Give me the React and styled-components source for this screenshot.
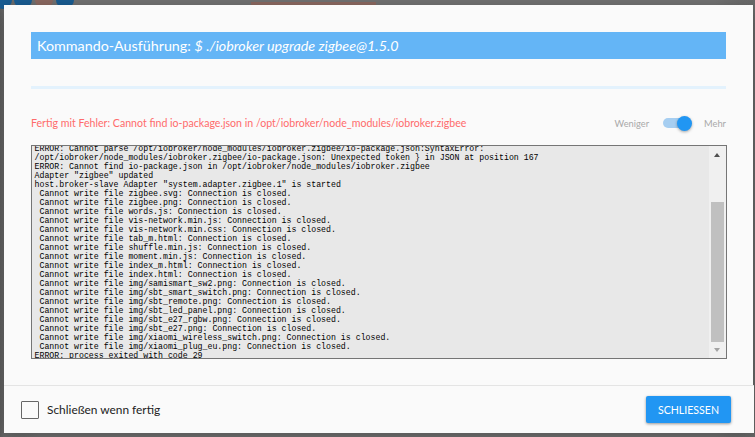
import React from "react";
import styled, { createGlobalStyle } from "styled-components";

const Global = createGlobalStyle`
  html, body { margin: 0; padding: 0; width: 755px; height: 437px; overflow: hidden; background: #6e6e6e; }
  #root { width: 755px; height: 437px; }
  * { box-sizing: border-box; }
`;

const Backdrop = styled.div`
  position: relative;
  width: 755px;
  height: 437px;
  background: linear-gradient(90deg, #5f5f5f 0, #6a6a6a 4px, #757575 40px, #757575 715px, #6a6a6a 755px);
  overflow: hidden;
  padding: 5px 2px 4px 4px;
`;
const BgCircle = styled.span`
  position: absolute;
  top: -9px;
  left: ${p => p.$x}px;
  width: 18px;
  height: 18px;
  border-radius: 50%;
  background: ${p => p.$c};
`;
const BgBar = styled.span`
  position: absolute;
  top: 2px;
  left: 251px;
  width: 125px;
  height: 3px;
  background: #8f6b63;
`;
const Dialog = styled.div`
  position: relative;
  height: 100%;
  background: #fafafa;
  display: flex;
  flex-direction: column;
  box-shadow: 0 4px 20px rgba(0,0,0,.3);
  font-family: Lato, "Open Sans", sans-serif;
`;
const Body = styled.div`
  flex: 1;
  padding: 27px 26px 0 27px;
  display: flex;
  flex-direction: column;
`;
const Title = styled.div`
  height: 27px;
  margin-right: 1px;
  background: #64b5f6;
  color: #fff;
  font-size: 14.3px;
  line-height: 27px;
  padding-left: 6px;
  em { font-style: italic; }
`;
const Progress = styled.div`
  height: 3px;
  margin: 27px 1px 0 0;
  background: #e3f2fd;
`;
const StatusRow = styled.div`
  display: flex;
  align-items: center;
  justify-content: space-between;
  height: 20px;
  margin-top: 24px;
  padding-right: 1px;
`;
const ErrorText = styled.div`
  font-size: 10.6px;
  color: #ff6b6b;
  white-space: nowrap;
`;
const ToggleArea = styled.div`
  display: flex;
  align-items: center;
  font-size: 9.3px;
  color: #a9a9a9;
`;
const Track = styled.span`
  position: relative;
  width: 28px;
  height: 10px;
  border-radius: 5px;
  background: #a6cef1;
  margin: 0 13px 0 14px;
`;
const Thumb = styled.span`
  position: absolute;
  top: -2.5px;
  right: -1px;
  width: 15px;
  height: 15px;
  border-radius: 50%;
  background: #2196f3;
  box-shadow: 0 1px 3px rgba(0,0,0,.35);
`;
const LogBox = styled.div`
  position: relative;
  height: 214px;
  margin-top: 12px;
  border: 1px solid #757575;
  background: #e8e8e8;
  overflow: hidden;
  display: flex;
`;
const LogText = styled.pre`
  flex: 1;
  min-width: 0;
  margin: -2px 0 0;
  padding: 0 0 0 2.5px;
  font-family: "Liberation Mono", monospace;
  font-size: 8.24px;
  line-height: 9px;
  color: #000;
  overflow: hidden;
  white-space: pre;
`;
const Scrollbar = styled.div`
  flex: none;
  width: 17px;
  background: #f0f0f0;
  position: relative;
`;
const Thumbbar = styled.div`
  position: absolute;
  left: 2px;
  top: 56px;
  width: 13px;
  height: 140px;
  background: #c0c0c0;
`;
const Arrow = styled.span`
  position: absolute;
  left: 5px;
  ${p => (p.$up ? "top: 7px;" : "bottom: 6px;")}
  width: 0;
  height: 0;
  border-left: 3.5px solid transparent;
  border-right: 3.5px solid transparent;
  ${p => (p.$up ? "border-bottom: 4px solid #505050;" : "border-top: 4px solid #a3a3a3;")}
`;
const Footer = styled.div`
  height: 48px;
  margin-right: -1px;
  background: #fafafa;
  border-top: 1px solid #e4e4e4;
  display: flex;
  align-items: center;
  justify-content: space-between;
  padding: 0 23px 0 17px;
`;
const CheckLabel = styled.label`
  display: flex;
  align-items: center;
  font-size: 11.9px;
  color: #222;
`;
const CheckBoxEl = styled.span`
  width: 18px;
  height: 18px;
  border: 1px solid #666;
  border-radius: 1px;
  margin-right: 8px;
`;
const Button = styled.button`
  width: 85px;
  height: 27px;
  border: 0;
  border-radius: 2px;
  background: #2196f3;
  color: #fff;
  font-family: inherit;
  font-size: 10.6px;
  box-shadow: 0 1px 3px rgba(0,0,0,.4);
  padding: 0;
`;

const log = `ERROR: Cannot parse /opt/iobroker/node_modules/iobroker.zigbee/io-package.json:SyntaxError:
/opt/iobroker/node_modules/iobroker.zigbee/io-package.json: Unexpected token } in JSON at position 167
ERROR: Cannot find io-package.json in /opt/iobroker/node_modules/iobroker.zigbee
Adapter "zigbee" updated
host.broker-slave Adapter "system.adapter.zigbee.1" is started
 Cannot write file zigbee.svg: Connection is closed.
 Cannot write file zigbee.png: Connection is closed.
 Cannot write file words.js: Connection is closed.
 Cannot write file vis-network.min.js: Connection is closed.
 Cannot write file vis-network.min.css: Connection is closed.
 Cannot write file tab_m.html: Connection is closed.
 Cannot write file shuffle.min.js: Connection is closed.
 Cannot write file moment.min.js: Connection is closed.
 Cannot write file index_m.html: Connection is closed.
 Cannot write file index.html: Connection is closed.
 Cannot write file img/samismart_sw2.png: Connection is closed.
 Cannot write file img/sbt_smart_switch.png: Connection is closed.
 Cannot write file img/sbt_remote.png: Connection is closed.
 Cannot write file img/sbt_led_panel.png: Connection is closed.
 Cannot write file img/sbt_e27_rgbw.png: Connection is closed.
 Cannot write file img/sbt_e27.png: Connection is closed.
 Cannot write file img/xiaomi_wireless_switch.png: Connection is closed.
 Cannot write file img/xiaomi_plug_eu.png: Connection is closed.
ERROR: process exited with code 29`;

export default function App() {
  return (
    <Backdrop>
      <Global />
      <BgCircle $x={-6} $c="#1a5f96" />
      <BgCircle $x={14} $c="#1a5f96" />
      <BgCircle $x={35} $c="#8f6b63" />
      <BgCircle $x={56} $c="#1a5f96" />
      <BgBar />
      <Dialog>
        <Body>
          <Title>Kommando-Ausführung: <em>$ ./iobroker upgrade zigbee@1.5.0</em></Title>
          <Progress />
          <StatusRow>
            <ErrorText>Fertig mit Fehler: Cannot find io-package.json in /opt/iobroker/node_modules/iobroker.zigbee</ErrorText>
            <ToggleArea>
              Weniger
              <Track><Thumb /></Track>
              Mehr
            </ToggleArea>
          </StatusRow>
          <LogBox>
            <LogText>{log}</LogText>
            <Scrollbar>
              <Arrow $up />
              <Thumbbar />
              <Arrow />
            </Scrollbar>
          </LogBox>
        </Body>
        <Footer>
          <CheckLabel><CheckBoxEl />Schließen wenn fertig</CheckLabel>
          <Button>SCHLIESSEN</Button>
        </Footer>
      </Dialog>
    </Backdrop>
  );
}
